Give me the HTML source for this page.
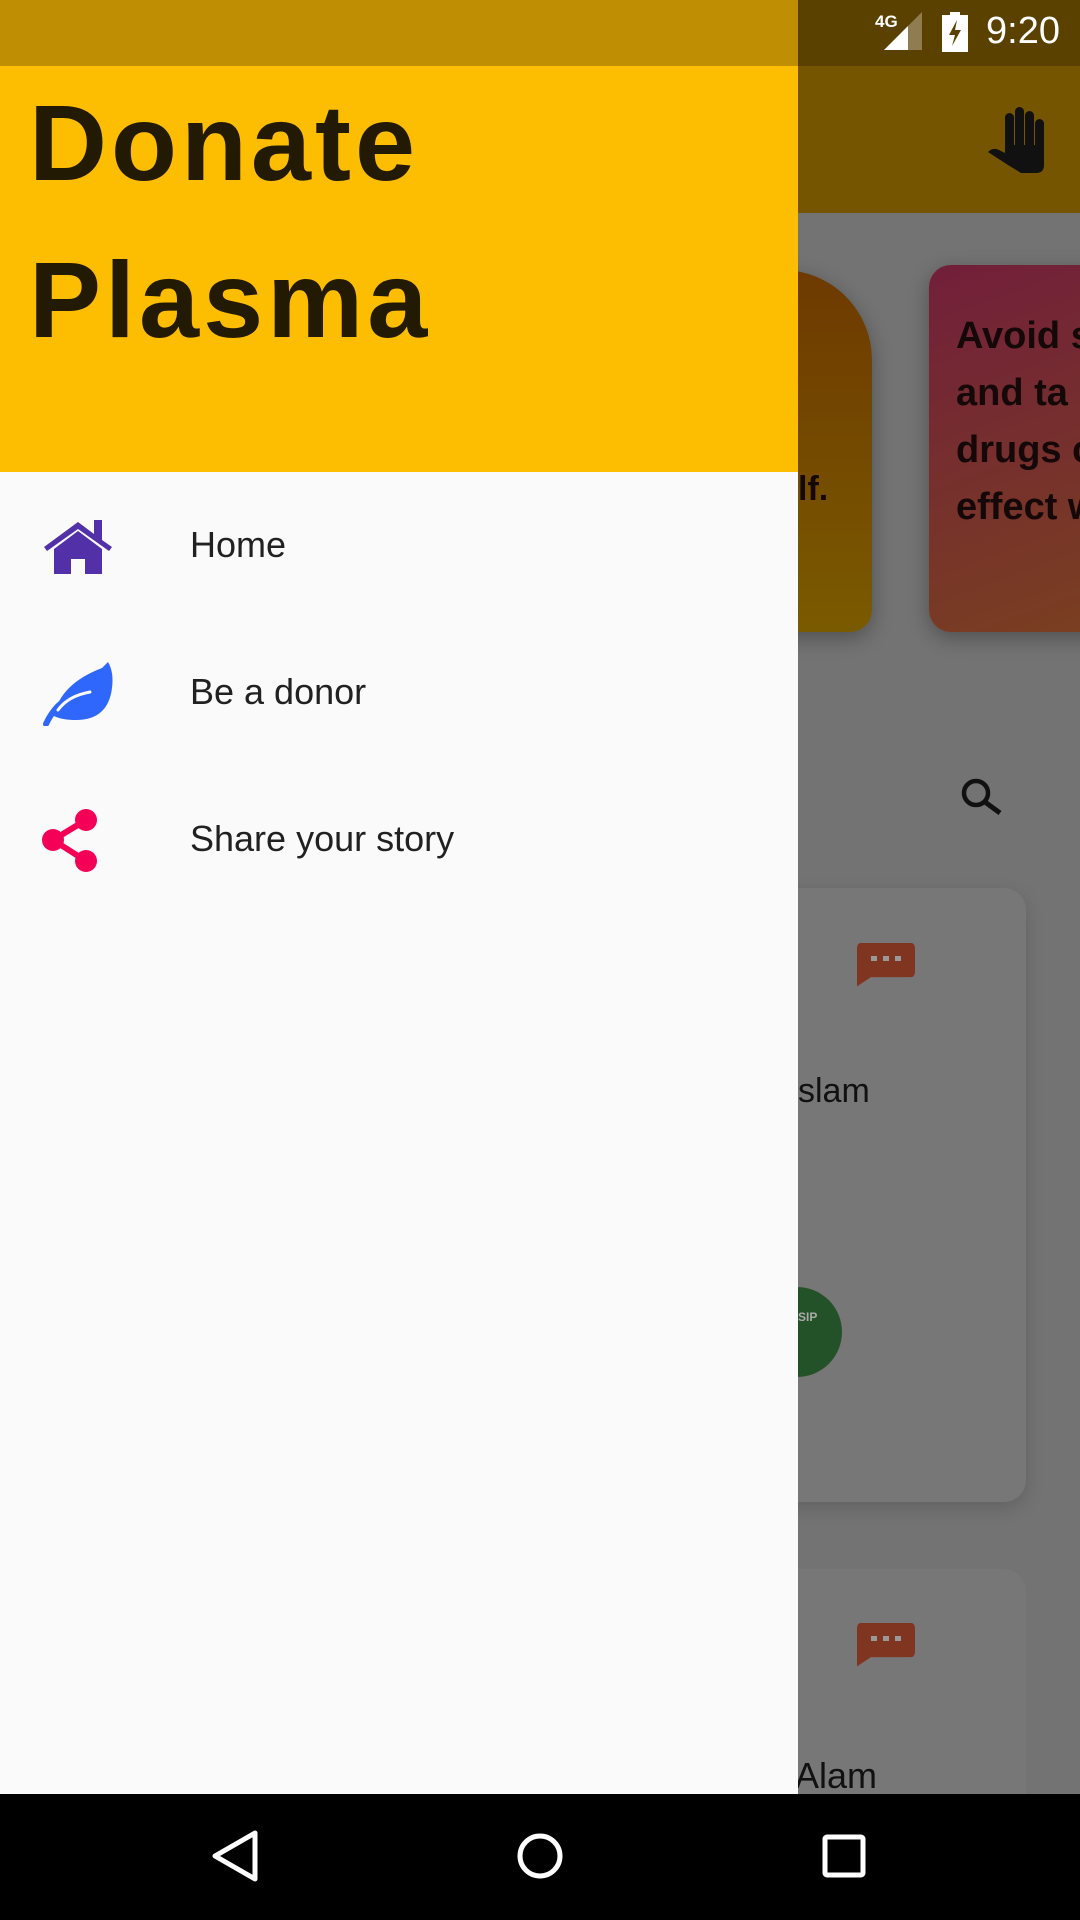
<!DOCTYPE html>
<html><head><meta charset="utf-8"><style>
*{margin:0;padding:0;box-sizing:border-box}
html,body{width:1080px;height:1920px;overflow:hidden}
body{position:relative;background:#737373;font-family:"Liberation Sans",sans-serif}
.abs{position:absolute}
</style></head><body>
<div class="abs" style="left:0;top:0;width:1080px;height:66px;background:#5a4100"></div>
<div class="abs" style="left:0;top:66px;width:1080px;height:147px;background:#755500"></div>
<svg class="abs" style="left:985px;top:105px" width="65" height="70" viewBox="0 0 65 70">
<rect x="20" y="8" width="9" height="40" rx="4.5" fill="#111"/>
<rect x="30" y="2" width="9" height="46" rx="4.5" fill="#111"/>
<rect x="40" y="6" width="9" height="42" rx="4.5" fill="#111"/>
<rect x="50" y="14" width="9" height="36" rx="4.5" fill="#111"/>
<path d="M20 40 L59 40 L59 60 Q59 68 51 68 L36 68 L23 60 L3 47 Q8 42 14 45 L20 48 Z" fill="#111"/>
</svg>
<div class="abs" style="left:700px;top:270px;width:172px;height:362px;border-radius:0 90px 22px 22px;background:linear-gradient(180deg,#6e3a00,#7a5a00);box-shadow:0 6px 20px rgba(0,0,0,.3)"></div>
<div class="abs" style="left:798px;top:470px;font:bold 34px 'Liberation Sans',sans-serif;color:#140800">lf.</div>
<div class="abs" style="left:929px;top:265px;width:200px;height:367px;border-radius:22px;background:linear-gradient(160deg,#721f3a,#7a4020);box-shadow:0 6px 20px rgba(0,0,0,.3)"></div>
<div class="abs" style="left:956px;top:308px;font:bold 38px/57px 'Liberation Sans',sans-serif;color:#140808;white-space:nowrap">Avoid s<br>and ta<br>drugs c<br>effect w</div>
<svg class="abs" style="left:958px;top:775px" width="50" height="50" viewBox="0 0 50 50"><circle cx="18" cy="18" r="12" fill="none" stroke="#111" stroke-width="4.5"/><line x1="27" y1="27" x2="42" y2="38" stroke="#111" stroke-width="5"/></svg>
<div class="abs" style="left:760px;top:888px;width:266px;height:614px;border-radius:22px;background:#777;box-shadow:0 6px 18px rgba(0,0,0,.15)"></div>
<svg class="abs" style="left:857px;top:943px" width="58" height="58" viewBox="0 0 58 58"><path d="M4 0 H54 Q58 0 58 4 V18 Q58 22 54 22 H14 L0 28 V4 Q0 0 4 0Z" transform="scale(1,1.55)" fill="#7f3520"/><rect x="14" y="13" width="6" height="5" fill="#999"/><rect x="26" y="13" width="6" height="5" fill="#999"/><rect x="38" y="13" width="6" height="5" fill="#999"/></svg>
<div class="abs" style="left:798px;top:1072px;font:34px 'Liberation Sans',sans-serif;color:#111">slam</div>
<div class="abs" style="left:752px;top:1287px;width:90px;height:90px;border-radius:50%;background:#245228"></div>
<div class="abs" style="left:798px;top:1310px;font:bold 12px 'Liberation Sans',sans-serif;color:#aaa">SIP</div>
<div class="abs" style="left:760px;top:1569px;width:266px;height:300px;border-radius:22px;background:#777"></div>
<svg class="abs" style="left:857px;top:1623px" width="58" height="58" viewBox="0 0 58 58"><path d="M4 0 H54 Q58 0 58 4 V18 Q58 22 54 22 H14 L0 28 V4 Q0 0 4 0Z" transform="scale(1,1.55)" fill="#7f3520"/><rect x="14" y="13" width="6" height="5" fill="#999"/><rect x="26" y="13" width="6" height="5" fill="#999"/><rect x="38" y="13" width="6" height="5" fill="#999"/></svg>
<div class="abs" style="left:795px;top:1755px;font:36px 'Liberation Sans',sans-serif;color:#111">Alam</div>
<div class="abs" style="left:875px;top:12px;font:bold 17px 'Liberation Sans',sans-serif;color:#fff">4G</div>
<svg class="abs" style="left:884px;top:12px" width="38" height="40" viewBox="0 0 38 40"><polygon points="38,0 38,38 0,38" fill="#8f7c50"/><polygon points="24,14 24,38 0,38" fill="#fff"/></svg>
<svg class="abs" style="left:942px;top:12px" width="26" height="40" viewBox="0 0 26 40"><rect x="8" y="0" width="10" height="4" fill="#fff"/><rect x="0" y="3" width="26" height="37" fill="#fff"/><path d="M15 8 L7 23 H13 L10 34 L19 18 H13 Z" fill="#5a4100"/></svg>
<div class="abs" style="left:986px;top:10px;font:38px 'Liberation Sans',sans-serif;color:#fff">9:20</div>
<div class="abs" style="left:0;top:0;width:798px;height:1794px;background:#fafafa"></div>
<div class="abs" style="left:0;top:0;width:798px;height:66px;background:#bf8e02"></div>
<div class="abs" style="left:0;top:66px;width:798px;height:406px;background:#fdbd01"></div>
<div class="abs" style="left:29px;top:64px;font:bold 108px/157px 'Liberation Sans',sans-serif;color:#231a03;letter-spacing:4px">Donate<br>Plasma</div>
<svg class="abs" style="left:42px;top:519px" width="72" height="56" viewBox="0 0 72 56"><path d="M2 28 L36 3 L52 15 V1 H60 V21 L70 28 L67 32 L36 10 L5 32Z" fill="#5230a8"/><path d="M12 30 L36 12 L60 30 V55 H43 V40 H29 V55 H12Z" fill="#5230a8"/></svg>
<div class="abs" style="left:190px;top:524px;font:36px 'Liberation Sans',sans-serif;color:#212121">Home</div>
<svg class="abs" style="left:42px;top:662px" width="72" height="64" viewBox="0 0 72 64"><path d="M66 0 Q72 10 70 26 Q66 58 34 58 Q20 58 12 54 Q18 22 60 6 Z" fill="#2f66fb"/><path d="M4 62 Q18 32 48 30" stroke="#2f66fb" stroke-width="6" fill="none" stroke-linecap="round"/><path d="M16 48 Q26 34 48 30" stroke="#fafafa" stroke-width="3" fill="none" stroke-linecap="round"/></svg>
<div class="abs" style="left:190px;top:671px;font:36px 'Liberation Sans',sans-serif;color:#212121">Be a donor</div>
<svg class="abs" style="left:42px;top:809px" width="56" height="64" viewBox="0 0 56 64"><line x1="11" y1="31" x2="44" y2="11" stroke="#f50057" stroke-width="6"/><line x1="11" y1="31" x2="44" y2="52" stroke="#f50057" stroke-width="6"/><circle cx="44" cy="11" r="11" fill="#f50057"/><circle cx="11" cy="31" r="11" fill="#f50057"/><circle cx="44" cy="52" r="11" fill="#f50057"/></svg>
<div class="abs" style="left:190px;top:818px;font:36px 'Liberation Sans',sans-serif;color:#212121">Share your story</div>
<div class="abs" style="left:0;top:1794px;width:1080px;height:126px;background:#000"></div>
<svg class="abs" style="left:210px;top:1830px" width="50" height="52" viewBox="0 0 50 52"><polygon points="45,3 45,49 5,26" fill="none" stroke="#fff" stroke-width="5" stroke-linejoin="round"/></svg>
<svg class="abs" style="left:515px;top:1831px" width="50" height="50" viewBox="0 0 50 50"><circle cx="25" cy="25" r="20" fill="none" stroke="#fff" stroke-width="5"/></svg>
<svg class="abs" style="left:822px;top:1834px" width="44" height="44" viewBox="0 0 44 44"><rect x="3" y="3" width="38" height="38" rx="2" fill="none" stroke="#fff" stroke-width="5"/></svg>
</body></html>
